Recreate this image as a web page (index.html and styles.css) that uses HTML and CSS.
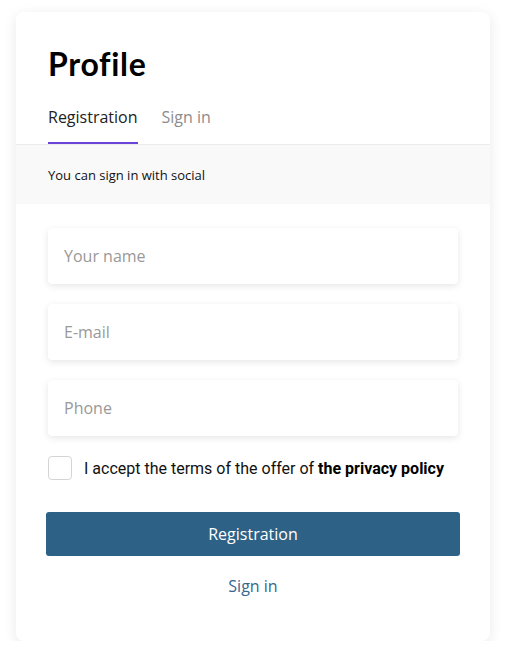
FILE: index.html
```html
<!DOCTYPE html>
<html lang="en">
<head>
<meta charset="utf-8">
<title>Profile</title>
<link rel="stylesheet" href="styles.css">
</head>
<body>
<div class="card">
  <div class="head">
    <h1 class="title">Profile</h1>
    <div class="tabs">
      <span class="tab active">Registration</span>
      <span class="tab">Sign in</span>
    </div>
  </div>
  <div class="social">You can sign in with social</div>
  <form class="form">
    <input class="field" type="text" placeholder="Your name">
    <input class="field" type="text" placeholder="E-mail">
    <input class="field" type="text" placeholder="Phone">
    <label class="agree">
      <span class="box"></span>
      <span class="agree-text">I accept the terms of the offer of <b>the privacy policy</b></span>
    </label>
    <button class="submit" type="button">Registration</button>
    <a class="link" href="#">Sign in</a>
  </form>
</div>
</body>
</html>
```
FILE: styles.css
```css
* { box-sizing: border-box; }
body {
  margin: 0;
  background: #fff;
  font-family: "Open Sans", "Noto Sans", sans-serif;
  color: #111;
}
.card {
  margin: 12px 0 0 16px;
  width: 474px;
  background: #fff;
  border-radius: 8px;
  box-shadow: 0 3px 14px rgba(0, 0, 0, 0.09);
  padding-bottom: 44px;
  overflow: hidden;
}
.head {
  padding: 30px 32px 0;
  border-bottom: 1px solid #ececec;
}
.title {
  margin: 0;
  font-family: "Lato", sans-serif;
  font-weight: 700;
  font-size: 32px;
  line-height: 44px;
  letter-spacing: 0.7px;
  color: #000;
}
.tabs {
  display: flex;
  gap: 24px;
  margin-top: 20px;
}
.tab {
  font-size: 16px;
  line-height: 22px;
  padding-bottom: 14px;
  color: #8c8c8c;
  border-bottom: 2px solid transparent;
}
.tab.active {
  color: #222;
  border-bottom-color: #6a44d8;
}
.social {
  background: #f9f9f9;
  height: 59px;
  display: flex;
  align-items: center;
  padding: 0 32px;
  font-size: 13px;
  color: #111;
}
.form {
  display: flex;
  flex-direction: column;
  padding: 24px 32px 0;
}
.field {
  height: 56px;
  border: none;
  border-radius: 4px;
  box-shadow: 0 2px 7px rgba(0, 0, 0, 0.1);
  padding: 0 16px;
  font-family: "Open Sans", sans-serif;
  font-size: 16px;
  margin-bottom: 20px;
  outline: none;
}
.field::placeholder { color: #999; }
.agree {
  display: flex;
  align-items: center;
  gap: 12px;
  height: 24px;
  margin-bottom: 32px;
}
.box {
  width: 24px;
  height: 24px;
  border: 1px solid #d4d4d4;
  border-radius: 4px;
  flex: none;
}
.agree-text {
  font-family: "Roboto", sans-serif;
  font-size: 16px;
  color: #111;
}
.agree-text b { font-weight: 700; color: #000; }
.submit {
  height: 44px;
  margin: 0 -2px;
  border: none;
  border-radius: 3px;
  background: #2d6186;
  color: #fff;
  font-family: "Open Sans", sans-serif;
  font-size: 16px;
}
.link {
  align-self: center;
  margin-top: 19px;
  font-size: 16px;
  line-height: 22px;
  color: #36678f;
  text-decoration: none;
}
```
